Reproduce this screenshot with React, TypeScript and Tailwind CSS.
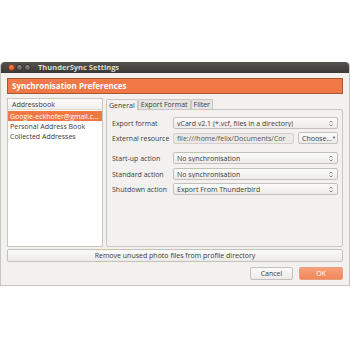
import React from "react";

const font = { fontFamily: '"Open Sans", "Liberation Sans", sans-serif' };

function UpDown() {
    return (
        <svg width="4" height="7" viewBox="0 0 4 7" className="shrink-0">
            <path d="M0.5 2.5 L2 1 L3.5 2.5" fill="none" stroke="#6b6b6b" strokeWidth="0.8" />
            <path d="M0.5 4.5 L2 6 L3.5 4.5" fill="none" stroke="#6b6b6b" strokeWidth="0.8" />
        </svg>
    );
}

function Combo({ value }: { value: string }) {
    return (
        <div className="flex h-[12px] min-w-0 flex-1 items-center justify-between rounded-[2px] border border-[#c4c1bb] bg-gradient-to-b from-[#fbfbfa] to-[#ecebe9] pl-[3px] pr-[4px] text-[#3c3c3c]">
            <span className="truncate">{value}</span>
            <UpDown />
        </div>
    );
}

function Row({ label, children }: { label: string; children: React.ReactNode }) {
    return (
        <div className="flex items-center">
            <span className="w-[61px] shrink-0 whitespace-nowrap text-[#3c3c3c]">{label}</span>
            {children}
        </div>
    );
}

export default function App() {
    return (
        <div className="h-[350px] w-[350px] bg-white text-[7px] leading-none" style={font}>
            <div className="h-[62px]" />

            {/* Window */}
            <div className="flex h-[224px] flex-col rounded-t-[4px] border-x border-b border-[#c9c6c0]">
                {/* Title bar */}
                <div className="flex h-[11px] shrink-0 items-center rounded-t-[4px] bg-gradient-to-b from-[#55544f] to-[#3a3935] pl-[7px]">
                    <span className="h-[7px] w-[7px] rounded-full border border-[#8a3b1b] bg-gradient-to-b from-[#f58a5b] to-[#e05a22]" />
                    <span className="ml-[1px] h-[7px] w-[7px] rounded-full border border-[#33322f] bg-gradient-to-b from-[#8d8b85] to-[#5c5b56]" />
                    <span className="ml-[1px] h-[7px] w-[7px] rounded-full border border-[#33322f] bg-gradient-to-b from-[#8d8b85] to-[#5c5b56]" />
                    <span className="ml-[7px] whitespace-nowrap text-[7.5px] font-bold text-[#dfdbd2]">ThunderSync Settings</span>
                </div>

                {/* Body */}
                <div className="flex flex-1 flex-col bg-[#f2f1f0] px-[6px] pt-[5px]">
                    <div className="flex h-[16px] shrink-0 items-center border border-[#a95532] bg-[#f07746] pl-[4px] text-[8px] font-bold text-white">
                        Synchronisation Preferences
                    </div>

                    <div className="mt-[4px] flex h-[149px] shrink-0">
                        {/* Address books */}
                        <div className="flex w-[96px] shrink-0 flex-col border border-[#c9c6c0] bg-white">
                            <div className="flex h-[11px] items-center border-b border-[#dcdad5] bg-gradient-to-b from-[#fbfbfa] to-[#f0efed] pl-[4px] text-[#3c3c3c]">
                                Addressbook
                            </div>
                            <div className="mt-[1px] flex h-[10px] items-center overflow-hidden bg-[#f07746] pl-[2px] text-white">
                                <span className="whitespace-nowrap">Google-eckhofer@gmail.c...</span>
                            </div>
                            <div className="flex h-[10px] items-center whitespace-nowrap pl-[2px] text-[#3c3c3c]">Personal Address Book</div>
                            <div className="flex h-[10px] items-center whitespace-nowrap pl-[2px] text-[#3c3c3c]">Collected Addresses</div>
                        </div>

                        {/* Tabs */}
                        <div className="ml-[3px] flex min-w-0 flex-1 flex-col">
                            <div className="flex h-[11px] shrink-0 items-end whitespace-nowrap text-[#3c3c3c]">
                                <div className="relative z-10 -mb-px flex h-[11px] items-center rounded-t-[2px] border border-b-0 border-[#c9c6c0] bg-[#f2f1f0] px-[2px]">
                                    General
                                </div>
                                <div className="flex h-[10px] items-center rounded-t-[2px] border border-b-0 border-[#c9c6c0] bg-[#e6e4e1] px-[2px]">
                                    Export Format
                                </div>
                                <div className="flex h-[10px] items-center rounded-t-[2px] border border-b-0 border-[#c9c6c0] bg-[#e6e4e1] px-[2px]">
                                    Filter
                                </div>
                            </div>
                            <div className="flex flex-1 flex-col rounded-[2px] border border-[#c9c6c0] pl-[5px] pr-[4px] pt-[7px]">
                                <Row label="Export format">
                                    <Combo value="vCard v2.1 (*.vcf, files in a directory)" />
                                </Row>
                                <div className="mt-[3px]">
                                    <Row label="External resource">
                                        <div className="flex h-[11px] min-w-0 flex-1 items-center overflow-hidden rounded-[2px] border border-[#d3d0cb] bg-[#eceae7] pl-[3px] text-[#555]">
                                            <span className="whitespace-nowrap">file:///home/felix/Documents/Cor</span>
                                        </div>
                                        <div className="ml-[4px] flex h-[12px] w-[40px] shrink-0 items-center justify-between whitespace-nowrap rounded-[2px] border border-[#c4c1bb] bg-gradient-to-b from-[#fbfbfa] to-[#ecebe9] pl-[3px] pr-[3px] text-[#3c3c3c]">
                                            <span>Choose...</span>
                                            <span className="text-[4px] text-[#555]">▼</span>
                                        </div>
                                    </Row>
                                </div>
                                <div className="mt-[8px]">
                                    <Row label="Start-up action">
                                        <Combo value="No synchronisation" />
                                    </Row>
                                </div>
                                <div className="mt-[4px]">
                                    <Row label="Standard action">
                                        <Combo value="No synchronisation" />
                                    </Row>
                                </div>
                                <div className="mt-[3px]">
                                    <Row label="Shutdown action">
                                        <Combo value="Export From Thunderbird" />
                                    </Row>
                                </div>
                            </div>
                        </div>
                    </div>

                    <div className="mt-[2px] flex h-[13px] shrink-0 items-center justify-center rounded-[2px] border border-[#c4c1bb] bg-gradient-to-b from-[#fbfbfa] to-[#ecebe9] text-[#3c3c3c]">
                        Remove unused photo files from profile directory
                    </div>

                    <div className="mt-[5px] flex shrink-0 justify-end gap-[6px]">
                        <div className="flex h-[13px] w-[43px] items-center justify-center rounded-[2px] border border-[#c4c1bb] bg-gradient-to-b from-[#fbfbfa] to-[#ecebe9] text-[#3c3c3c]">
                            Cancel
                        </div>
                        <div className="flex h-[13px] w-[44px] items-center justify-center rounded-[2px] border border-[#e7a07f] bg-gradient-to-b from-[#f7a07a] to-[#f08559] text-white">
                            OK
                        </div>
                    </div>
                </div>
            </div>
        </div>
    );
}
